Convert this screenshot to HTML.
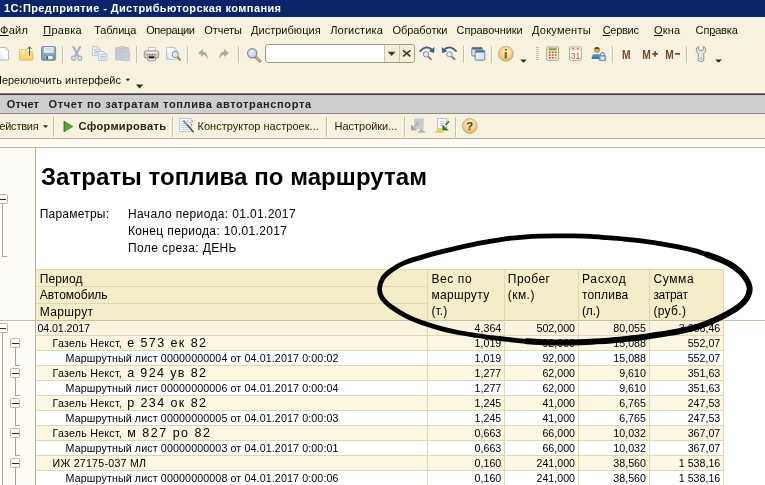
<!DOCTYPE html>
<html lang="ru">
<head>
<meta charset="utf-8">
<title>1С:Предприятие - Дистрибьюторская компания</title>
<style>
html,body{margin:0;padding:0}
body{width:765px;height:485px;overflow:hidden;position:relative;will-change:transform;background:#f7f2e0;font-family:'Liberation Sans',sans-serif}
.a{position:absolute}
.t{position:absolute;white-space:pre;line-height:20px;height:20px}
.t u{text-decoration:underline;text-underline-offset:1px}
.sep{position:absolute;width:1px;background:#c9c3a8;box-shadow:1px 0 0 #fffdf4}
.hl{position:absolute;height:1px;background:#d9cf9f}
.vl{position:absolute;width:1px;background:#d9cf9f}
.box{position:absolute;width:8.4px;height:8px;border:1px solid #b9b49e;background:#fdfbf2;border-radius:1.5px}
.box:after{content:"";position:absolute;left:1px;top:3.5px;width:6.6px;height:1px;background:#2a2a2a}
.tl{position:absolute;background:#a8a288}
</style>
</head>
<body>
<!-- title bar -->
<div class="a" style="left:0;top:0;width:765px;height:17px;background:#0a246a"></div>
<!-- toolbar search box -->
<div class="a" style="left:265px;top:44px;width:148px;height:17px;border:1px solid #a39d84;border-radius:3px;background:#fff;overflow:hidden">
  <div class="a" style="left:118px;top:0;width:30px;height:17px;background:#f3eedb"></div>
  <div class="a" style="left:118px;top:0;width:1px;height:17px;background:#cfc8ac"></div>
  <div class="a" style="left:133px;top:0;width:1px;height:17px;background:#cfc8ac"></div>
</div>
<svg class="a" style="left:0;top:0" width="765" height="148" viewBox="0 0 765 148">
<defs>
<linearGradient id="gdoc" x1="1" y1="0" x2="0" y2="1"><stop offset="0.45" stop-color="#fff"/><stop offset="1" stop-color="#d3ddee"/></linearGradient>
<linearGradient id="gfold" x1="0" y1="0" x2="0" y2="1"><stop offset="0" stop-color="#fdeaa6"/><stop offset="1" stop-color="#f3d066"/></linearGradient>
<linearGradient id="gsave" x1="0" y1="0" x2="0" y2="1"><stop offset="0" stop-color="#a6bbd1"/><stop offset="1" stop-color="#7f9ab6"/></linearGradient>
<radialGradient id="ginfo" cx="0.5" cy="0.35" r="0.7"><stop offset="0" stop-color="#fff3d6"/><stop offset="0.55" stop-color="#f8cf8c"/><stop offset="1" stop-color="#eda95a"/></radialGradient>
<radialGradient id="glens" cx="0.4" cy="0.35" r="0.7"><stop offset="0" stop-color="#e8f0ff"/><stop offset="1" stop-color="#b4c6ea"/></radialGradient>
<linearGradient id="gwin" x1="0" y1="0" x2="1" y2="1"><stop offset="0" stop-color="#fff"/><stop offset="1" stop-color="#c9d6ea"/></linearGradient>
</defs>
<!-- new doc -->
<path d="M-2.5,47.5H6L8.5,50V60H-2.5Z" fill="url(#gdoc)" stroke="#b3bccd"/>
<path d="M6,47.5V50H8.5" fill="#e9eef6" stroke="#b3bccd" stroke-width="0.8"/>
<!-- open folder -->
<path d="M19.5,50.5Q19.5,49.5 20.5,49.5H25.5L27,52H31.8Q32.8,52 32.8,53V59.2Q32.8,60.2 31.8,60.2H20.5Q19.5,60.2 19.5,59.2Z" fill="url(#gfold)" stroke="#e3bd55" stroke-width="0.9"/>
<path d="M29.5,55.5V47.2M27.2,49.3L29.5,46.8L31.8,49.3" fill="none" stroke="#44525e" stroke-width="0.95"/>
<!-- save -->
<rect x="41.6" y="46.6" width="14" height="13.6" rx="1.2" fill="url(#gsave)" stroke="#6c89a7" stroke-width="1"/>
<rect x="44" y="47.2" width="9.4" height="5.4" fill="#f4f7fb"/>
<path d="M45,48.8H52.4M45,50.6H52.4" stroke="#b9c6d6" stroke-width="0.8"/>
<rect x="45" y="55.2" width="8" height="4.6" fill="#e8ebef" stroke="#50627a" stroke-width="0.6"/>
<rect x="46.2" y="56.2" width="1.6" height="3" fill="#2e3c50"/>
<!-- sep -->
<path d="M62.5,46V63" stroke="#c6bfa5"/><path d="M63.5,46V63" stroke="#fdfbf3"/>
<!-- scissors -->
<g fill="#a7b2c6" stroke="none">
<path d="M71.8,46.2L74.4,46.2L79.2,55.8L77.4,57Z"/><path d="M81.6,46.2L79,46.2L74.2,55.8L76,57Z"/>
</g>
<g fill="none" stroke="#a7b2c6" stroke-width="1.4">
<rect x="71.8" y="56.2" width="3.6" height="3.8" rx="1"/>
<rect x="78" y="56.2" width="3.6" height="3.8" rx="1"/>
</g>
<!-- copy -->
<path d="M92.6,46.6H97.6L100.2,49.2V55.6H92.6Z" fill="#f1f4f9" stroke="#b5becd" stroke-width="0.9"/>
<path d="M97.6,46.6V49.2H100.2" fill="#dfe5ee" stroke="#b5becd" stroke-width="0.7"/>
<path d="M94.2,49.5H96.6M94.2,51.3H98.6M94.2,53.1H98.6" stroke="#9db0cb" stroke-width="0.9"/>
<path d="M98.6,51.4H103.8L106.8,54.4V60.4H98.6Z" fill="#f4f6fa" stroke="#b5becd" stroke-width="0.9"/>
<path d="M103.8,51.4V54.4H106.8" fill="#dfe5ee" stroke="#b5becd" stroke-width="0.7"/>
<path d="M100.2,54.6H102.8M100.2,56.4H105.2M100.2,58.2H105.2" stroke="#9db0cb" stroke-width="0.9"/>
<!-- paste -->
<rect x="115.6" y="47.6" width="13.4" height="12.4" rx="1" fill="#c6cad8" stroke="#b9bdcb" stroke-width="0.8"/>
<rect x="119.6" y="46.4" width="5.4" height="2.8" rx="1" fill="#dcc9ad" stroke="#c8b79e" stroke-width="0.6"/>
<rect x="121.6" y="52.4" width="8" height="8" fill="#cad1d6" stroke="#b8c0c8" stroke-width="0.7"/>
<path d="M123,55H128M123,57H128" stroke="#bcc4d2" stroke-width="0.8"/>
<path d="M136.5,46V63" stroke="#c6bfa5"/><path d="M137.5,46V63" stroke="#fdfbf3"/>
<!-- printer -->
<rect x="148.6" y="47.4" width="6.6" height="4.6" fill="#f7f7fa" stroke="#b9b4be" stroke-width="0.7"/>
<rect x="144.3" y="50.9" width="14.4" height="7.3" rx="2" fill="#ddd3cf" stroke="#8f807c" stroke-width="0.9"/>
<path d="M145.6,52.2H157.4" stroke="#f3eeeb" stroke-width="1"/>
<path d="M146.4,54.6H156.8" stroke="#7b5a50" stroke-width="0.9" stroke-dasharray="1.6 0.9"/>
<rect x="147.8" y="56" width="7.6" height="4.8" rx="0.6" fill="#efecea" stroke="#8f807c" stroke-width="0.8"/>
<rect x="148.8" y="56.4" width="5.6" height="2" fill="#1d1a1a"/>
<!-- preview -->
<path d="M166.6,47.4H174.4L177.2,50.2V59.4H166.6Z" fill="url(#gdoc)" stroke="#b3bccd" stroke-width="0.9"/>
<path d="M174.4,47.4V50.2H177.2" fill="#e9eef6" stroke="#b3bccd" stroke-width="0.7"/>
<path d="M177.4,57L180,59.8" stroke="#c0762f" stroke-width="2" stroke-linecap="round"/>
<circle cx="175.2" cy="54.5" r="3.1" fill="#e4e7f2" stroke="#8c8b9c" stroke-width="1"/>
<path d="M187.5,46V63" stroke="#c6bfa5"/><path d="M188.5,46V63" stroke="#fdfbf3"/>
<!-- undo / redo -->
<path d="M198.2,53L203,48.8V51.4Q207.6,51.6 207.8,59.2Q206,55.2 203,55V57Z" fill="#aab09d"/>
<path d="M228.9,53L224.1,48.8V51.4Q219.5,51.6 219.3,59.2Q221.1,55.2 224.1,55V57Z" fill="#aab09d"/>
<path d="M238.5,46V63" stroke="#c6bfa5"/><path d="M239.5,46V63" stroke="#fdfbf3"/>
<!-- magnifier -->
<path d="M256,57.2L259.8,61" stroke="#8d7458" stroke-width="3" stroke-linecap="round"/>
<path d="M256.2,57.4L259.7,60.9" stroke="#d6b48c" stroke-width="1.6" stroke-linecap="round"/>
<circle cx="252.2" cy="53.3" r="4.6" fill="url(#glens)" stroke="#8c8890" stroke-width="1.2"/>
<!-- search dropdown arrow and X -->
<path d="M387.6,51.8H395.6L391.6,56Z" fill="#4a3e10"/>
<path d="M403,50.4L410.4,56.4M410.4,50.4L403,56.4" stroke="#4a3e10" stroke-width="1.7"/>
<!-- find next -->
<path d="M419.6,51.6Q426.4,44 432.6,50.2" fill="none" stroke="#3d5f88" stroke-width="1.7"/>
<path d="M434.6,47L434,53L428.8,51.2Z" fill="#3d5f88"/>
<path d="M428.2,56.6L431,59.2" stroke="#b07264" stroke-width="1.9" stroke-linecap="round"/>
<circle cx="426" cy="54.3" r="2.7" fill="#dfe7f6" stroke="#8d8fa5" stroke-width="1"/>
<!-- find prev -->
<path d="M456.6,51.6Q449.8,44 443.6,50.2" fill="none" stroke="#3d5f88" stroke-width="1.7"/>
<path d="M441.6,47L442.2,53L447.4,51.2Z" fill="#3d5f88"/>
<path d="M451.8,56.6L454.6,59.2" stroke="#b07264" stroke-width="1.9" stroke-linecap="round"/>
<circle cx="449.6" cy="54.3" r="2.7" fill="#dfe7f6" stroke="#8d8fa5" stroke-width="1"/>
<path d="M463.5,46V63" stroke="#c6bfa5"/><path d="M464.5,46V63" stroke="#fdfbf3"/>
<!-- windows -->
<rect x="471.8" y="47.4" width="10.4" height="8.6" rx="1" fill="#dfe7f2" stroke="#5f7c9c" stroke-width="0.9"/>
<rect x="472.2" y="47.6" width="9.6" height="2" fill="#4d6b8c"/>
<rect x="475.2" y="50.4" width="9.6" height="9.8" rx="1" fill="url(#gwin)" stroke="#5f7c9c" stroke-width="0.9"/>
<rect x="475.6" y="50.6" width="8.8" height="2" fill="#55728f"/>
<path d="M491.5,46V63" stroke="#c6bfa5"/><path d="M492.5,46V63" stroke="#fdfbf3"/>
<!-- info -->
<circle cx="505.9" cy="53.8" r="7.4" fill="url(#ginfo)" stroke="#c7a57c" stroke-width="0.9"/>
<circle cx="505.9" cy="49.8" r="1.15" fill="#5d7c1c"/>
<path d="M504.6,52H506.9V58.4H504.6Z" fill="#5d7c1c"/>
<path d="M520.2,59.4H526.8L523.5,62.8Z" fill="#382c08"/>
<!-- grip -->
<path d="M536,47.5H539M536,49.5H539M536,51.5H539M536,53.5H539M536,55.5H539M536,57.5H539M536,59.5H539" stroke="#c4bda2" stroke-width="1"/>
<!-- calculator -->
<rect x="546.8" y="47" width="11.8" height="13.4" rx="0.8" fill="#fbf0d2" stroke="#a29d8b" stroke-width="0.9"/>
<rect x="548.6" y="48.2" width="8.2" height="2.2" fill="#7fa94f"/>
<g fill="#a5532e"><rect x="548.8" y="51.6" width="1.8" height="1.5"/><rect x="551.8" y="51.6" width="1.8" height="1.5"/><rect x="554.8" y="51.6" width="1.8" height="1.5"/>
<rect x="548.8" y="54.3" width="1.8" height="1.5"/><rect x="551.8" y="54.3" width="1.8" height="1.5"/><rect x="554.8" y="54.3" width="1.8" height="1.5"/>
<rect x="548.8" y="57" width="1.8" height="1.5"/><rect x="551.8" y="57" width="1.8" height="1.5"/><rect x="554.8" y="57" width="1.8" height="1.5" fill="#d98a2c"/></g>
<!-- calendar -->
<rect x="569.5" y="47" width="11.8" height="13.4" rx="0.8" fill="#fffdf8" stroke="#a9a08c" stroke-width="0.9"/>
<rect x="570" y="47.4" width="10.8" height="2.8" fill="#f4dfb4"/>
<circle cx="573" cy="48.6" r="0.8" fill="#b5543a"/><circle cx="577.8" cy="48.6" r="0.8" fill="#b5543a"/>
<text x="575.4" y="59.2" font-family="'Liberation Sans',sans-serif" font-size="9.5" text-anchor="middle" fill="#d2472a" textLength="9.4" lengthAdjust="spacingAndGlyphs">31</text>
<!-- user + lock -->
<path d="M591.8,58.8V57Q591.8,54.4 595,54.2H599Q600,54.4 600,55.6V58.8Z" fill="#3c8fd2"/>
<path d="M591.8,58.8V57.4H600V58.8Z" fill="#2b6ea8"/>
<circle cx="597" cy="50" r="2.7" fill="#eaa63c" stroke="#b47a28" stroke-width="0.6"/>
<path d="M594.3,49.6Q594.6,46.8 597,46.9Q599.4,46.8 599.7,49.6Q597,47.8 594.3,49.6Z" fill="#4f4226"/>
<path d="M600.6,56V54.6Q600.6,52.6 602.5,52.6Q604.4,52.6 604.4,54.6V56" fill="none" stroke="#7a8ea8" stroke-width="1.1"/>
<rect x="599.3" y="55.6" width="6.4" height="5" rx="0.6" fill="#a6b6c9" stroke="#6b8199" stroke-width="0.8"/>
<rect x="601.4" y="56.8" width="2.2" height="3" fill="#f4f7fa"/>
<path d="M612.5,46V63" stroke="#c6bfa5"/><path d="M613.5,46V63" stroke="#fdfbf3"/>
<path d="M686.5,46V63" stroke="#c6bfa5"/><path d="M687.5,46V63" stroke="#fdfbf3"/>
<!-- wrench -->
<path d="M698.6,46.4V49.6Q698.6,50.6 701,50.6Q703.4,50.6 703.4,49.6V46.4Q705.8,47.4 705.8,50Q705.8,52.2 703.8,53.2V60Q703.8,61.6 701,61.6Q698.2,61.6 698.2,60V53.2Q696.2,52.2 696.2,50Q696.2,47.4 698.6,46.4Z" fill="#e6e6e6" stroke="#8b8b8b" stroke-width="0.9"/>
<circle cx="701" cy="58.6" r="1" fill="#fff" stroke="#9a9a9a" stroke-width="0.6"/>
<path d="M715.2,59.4H722L718.6,62.8Z" fill="#382c08"/>
<!-- toolbar 2 arrows -->
<path d="M125.6,78.8H130.2L127.9,81.2Z" fill="#382c08"/>
<path d="M136,84.6H143.2L139.6,88.6Z" fill="#382c08"/>
<!-- M buttons -->
<g font-family="'Liberation Sans',sans-serif" font-size="12.5" font-weight="700" fill="#75482b">
<text x="622.1" y="58.5" textLength="8.5" lengthAdjust="spacingAndGlyphs">M</text>
<text x="642.3" y="58.5" textLength="8.5" lengthAdjust="spacingAndGlyphs">M</text>
<text x="665.2" y="58.5" textLength="8.5" lengthAdjust="spacingAndGlyphs">M</text>
</g>
<path d="M652.4,53.9H657.9M655.15,51.1V56.7" stroke="#75482b" stroke-width="1.6"/>
<path d="M675,53.9H680" stroke="#75482b" stroke-width="1.7"/>
<!-- toolbar 3 -->
<path d="M42.9,125.2H48.1L45.5,128Z" fill="#382c08"/>
<path d="M53.5,117V137" stroke="#c6bfa5"/><path d="M54.5,117V137" stroke="#fdfbf3"/>
<path d="M64.2,121.2L73,126.4L64.2,131.8Z" fill="#5fa42e" stroke="#48792a" stroke-width="0.6"/>
<path d="M64.2,121.2V131.8" stroke="#3c6628" stroke-width="0.9"/>
<path d="M172.5,117V137" stroke="#c6bfa5"/><path d="M173.5,117V137" stroke="#fdfbf3"/>
<!-- wizard -->
<rect x="179.6" y="118.5" width="11.4" height="13" fill="#fbfcfe" stroke="#b4bed0" stroke-width="0.9"/>
<path d="M181.4,121.4H185M181.4,123.4H186M181.4,125.4H187.4M181.4,127.4H188.8M181.4,129.4H189" stroke="#b4c2d8" stroke-width="0.8"/>
<path d="M184,121L193.2,131.8" stroke="#454f5c" stroke-width="1.5" stroke-linecap="round"/>
<path d="M184,121L187,124.5" stroke="#6f9bd0" stroke-width="1.5" stroke-linecap="round"/>
<g fill="#d9584c"><rect x="187.2" y="120.4" width="1.2" height="1.2"/><rect x="191.6" y="120.6" width="1.2" height="1.2"/><rect x="190.6" y="124" width="1.2" height="1.2"/><rect x="189.4" y="122.2" width="1" height="1"/></g>
<path d="M326.5,117V137" stroke="#c6bfa5"/><path d="M327.5,117V137" stroke="#fdfbf3"/>
<path d="M404.5,117V137" stroke="#c6bfa5"/><path d="M405.5,117V137" stroke="#fdfbf3"/>
<!-- disabled icon -->
<rect x="414.2" y="118.4" width="9.6" height="10.8" fill="#c9cbd3"/>
<path d="M416,121H422M416,123H422M416,125H420" stroke="#bfc2cc" stroke-width="0.8"/>
<path d="M411,124.2L417.4,130.6H411Z" fill="#a3a79f"/><path d="M418.6,122.4L414.6,126.4" stroke="#a9ada6" stroke-width="1.6"/>
<path d="M417,132.8L421.5,128.6L426,132.8Z" fill="#b8b8b3"/>
<!-- second icon -->
<rect x="437.6" y="118.6" width="9" height="10.4" fill="#fcfdff" stroke="#b2bac9" stroke-width="0.9"/>
<path d="M439.4,121.4H444.8M439.4,123.4H444.8M439.4,125.4H442.4" stroke="#b9c0cc" stroke-width="0.8"/>
<path d="M449,121.4L445.4,125" stroke="#2f7f33" stroke-width="1.6"/>
<path d="M442.4,124.4L448.8,130.6H442.4Z" fill="#2f7f33"/>
<path d="M435,132.4L439.6,127.8L444.2,132.4Z" fill="#f3cf4c" stroke="#e2b93c" stroke-width="0.5"/>
<path d="M455.5,117V137" stroke="#c6bfa5"/><path d="M456.5,117V137" stroke="#fdfbf3"/>
<!-- help -->
<circle cx="469.8" cy="126" r="7.4" fill="url(#ginfo)" stroke="#c7a57c" stroke-width="0.9"/>
<text x="469.8" y="130.2" font-family="'Liberation Sans',sans-serif" font-size="11.5" font-weight="700" text-anchor="middle" fill="#4a3a1c">?</text>

</svg>

<!-- dark line + grey bar -->
<div class="a" style="left:0;top:93px;width:765px;height:1px;background:#7c7c7c"></div>
<div class="a" style="left:0;top:94px;width:765px;height:1px;background:#3a3a3a"></div>
<div class="a" style="left:0;top:95px;width:765px;height:18px;background:#cecece"></div>
<div class="a" style="left:0;top:113px;width:765px;height:1px;background:#8e8e8e"></div>
<!-- toolbar 3 bottom line and strip -->
<div class="a" style="left:0;top:138px;width:765px;height:1px;background:#b9b197"></div>
<div class="a" style="left:0;top:139px;width:765px;height:8px;background:#fcfaf2"></div>
<div class="a" style="left:0;top:147px;width:765px;height:1px;background:#bcb59c"></div>
<!-- content -->
<div class="a" style="left:0;top:148px;width:765px;height:337px;background:#fff"></div>
<div class="a" style="left:0;top:148px;width:35px;height:337px;background:#fdfcf6"></div>
<div class="a" style="left:35px;top:148px;width:1px;height:337px;background:#bcb59c"></div>
<div class="a" style="left:36px;top:269px;width:688px;height:51px;background:#f5edc8"></div>
<div class="a" style="left:36px;top:269px;width:688px;height:1px;background:#e0d7ac"></div>
<div class="a" style="left:36px;top:286px;width:391px;height:1px;background:#e0d7ac"></div>
<div class="a" style="left:36px;top:303px;width:391px;height:1px;background:#e0d7ac"></div>
<div class="a" style="left:36px;top:321px;width:688px;height:14px;background:#fdf2e0"></div>
<div class="a" style="left:36px;top:336px;width:688px;height:14px;background:#fcf7e3"></div>
<div class="a" style="left:36px;top:335px;width:688px;height:1px;background:#e0d7ac"></div>
<div class="a" style="left:36px;top:351px;width:688px;height:14px;background:#ffffff"></div>
<div class="a" style="left:36px;top:350px;width:688px;height:1px;background:#e0d7ac"></div>
<div class="a" style="left:36px;top:366px;width:688px;height:14px;background:#fcf7e3"></div>
<div class="a" style="left:36px;top:365px;width:688px;height:1px;background:#e0d7ac"></div>
<div class="a" style="left:36px;top:381px;width:688px;height:14px;background:#ffffff"></div>
<div class="a" style="left:36px;top:380px;width:688px;height:1px;background:#e0d7ac"></div>
<div class="a" style="left:36px;top:396px;width:688px;height:14px;background:#fcf7e3"></div>
<div class="a" style="left:36px;top:395px;width:688px;height:1px;background:#e0d7ac"></div>
<div class="a" style="left:36px;top:411px;width:688px;height:14px;background:#ffffff"></div>
<div class="a" style="left:36px;top:410px;width:688px;height:1px;background:#e0d7ac"></div>
<div class="a" style="left:36px;top:426px;width:688px;height:14px;background:#fcf7e3"></div>
<div class="a" style="left:36px;top:425px;width:688px;height:1px;background:#e0d7ac"></div>
<div class="a" style="left:36px;top:441px;width:688px;height:14px;background:#ffffff"></div>
<div class="a" style="left:36px;top:440px;width:688px;height:1px;background:#e0d7ac"></div>
<div class="a" style="left:36px;top:456px;width:688px;height:14px;background:#fcf7e3"></div>
<div class="a" style="left:36px;top:455px;width:688px;height:1px;background:#e0d7ac"></div>
<div class="a" style="left:36px;top:471px;width:688px;height:14px;background:#ffffff"></div>
<div class="a" style="left:36px;top:470px;width:688px;height:1px;background:#e0d7ac"></div>
<div class="a" style="left:0px;top:320px;width:765px;height:1px;background:#c5bfa6"></div>
<div class="a" style="left:427px;top:269px;width:1px;height:216px;background:#e0d7ac"></div>
<div class="a" style="left:504px;top:269px;width:1px;height:216px;background:#e0d7ac"></div>
<div class="a" style="left:578px;top:269px;width:1px;height:216px;background:#e0d7ac"></div>
<div class="a" style="left:649px;top:269px;width:1px;height:216px;background:#e0d7ac"></div>
<div class="a" style="left:723px;top:269px;width:1px;height:216px;background:#e0d7ac"></div>
<div class="box" style="left:-2.4px;top:194px"></div>
<div class="a" style="left:2px;top:204px;width:1px;height:52px;background:#a9a48c"></div>
<div class="a" style="left:2px;top:256px;width:5px;height:1px;background:#a9a48c"></div>
<div class="box" style="left:-2.4px;top:323px"></div>
<div class="a" style="left:2px;top:333px;width:1px;height:152px;background:#a9a48c"></div>
<div class="box" style="left:10px;top:338px"></div>
<div class="a" style="left:15px;top:348px;width:1px;height:18px;background:#a9a48c"></div>
<div class="a" style="left:15px;top:365px;width:5px;height:1px;background:#a9a48c"></div>
<div class="box" style="left:10px;top:368px"></div>
<div class="a" style="left:15px;top:378px;width:1px;height:18px;background:#a9a48c"></div>
<div class="a" style="left:15px;top:395px;width:5px;height:1px;background:#a9a48c"></div>
<div class="box" style="left:10px;top:398px"></div>
<div class="a" style="left:15px;top:408px;width:1px;height:18px;background:#a9a48c"></div>
<div class="a" style="left:15px;top:425px;width:5px;height:1px;background:#a9a48c"></div>
<div class="box" style="left:10px;top:428px"></div>
<div class="a" style="left:15px;top:438px;width:1px;height:18px;background:#a9a48c"></div>
<div class="a" style="left:15px;top:455px;width:5px;height:1px;background:#a9a48c"></div>
<div class="box" style="left:10px;top:458px"></div>
<div class="a" style="left:15px;top:468px;width:1px;height:18px;background:#a9a48c"></div>
<div class="a" style="left:15px;top:485px;width:5px;height:1px;background:#a9a48c"></div>
<span class="t" style="top:-1.81px;font-size:11px;font-weight:700;color:#fff;left:4.00px;letter-spacing:0.394px;">1С:Предприятие - Дистрибьюторская компания</span>
<span class="t" style="top:20.19px;font-size:11px;color:#151001;left:0.00px;letter-spacing:0.318px;"><u>Ф</u>айл</span>
<span class="t" style="top:20.19px;font-size:11px;color:#151001;left:43.20px;letter-spacing:0.266px;"><u>П</u>равка</span>
<span class="t" style="top:20.19px;font-size:11px;color:#151001;left:94.20px;letter-spacing:-0.157px;">Таблица</span>
<span class="t" style="top:20.19px;font-size:11px;color:#151001;left:146.20px;letter-spacing:-0.381px;">Операции</span>
<span class="t" style="top:20.19px;font-size:11px;color:#151001;left:204.30px;letter-spacing:-0.066px;">Отчеты</span>
<span class="t" style="top:20.19px;font-size:11px;color:#151001;left:251.00px;letter-spacing:0.024px;">Дистрибюция</span>
<span class="t" style="top:20.19px;font-size:11px;color:#151001;left:330.20px;letter-spacing:0.180px;">Логистика</span>
<span class="t" style="top:20.19px;font-size:11px;color:#151001;left:392.50px;letter-spacing:-0.058px;">Обработки</span>
<span class="t" style="top:20.19px;font-size:11px;color:#151001;left:456.60px;letter-spacing:-0.054px;">Справочники</span>
<span class="t" style="top:20.19px;font-size:11px;color:#151001;left:532.00px;letter-spacing:0.237px;">Документы</span>
<span class="t" style="top:20.19px;font-size:11px;color:#151001;left:602.70px;letter-spacing:-0.274px;"><u>С</u>ервис</span>
<span class="t" style="top:20.19px;font-size:11px;color:#151001;left:654.00px;letter-spacing:0.146px;"><u>О</u>кна</span>
<span class="t" style="top:20.19px;font-size:11px;color:#151001;left:695.60px;letter-spacing:-0.159px;">Сп<u>р</u>авка</span>
<span class="t" style="top:70.19px;font-size:11px;color:#151001;left:-6.00px;letter-spacing:-0.026px;">Переключить интерфейс</span>
<span class="t" style="top:94.19px;font-size:11px;font-weight:700;color:#222;left:6.70px;letter-spacing:0.149px;">Отчет</span>
<span class="t" style="top:94.19px;font-size:11px;font-weight:700;color:#222;left:48.50px;letter-spacing:0.615px;">Отчет по затратам топлива автотранспорта</span>
<span class="t" style="top:116.19px;font-size:11px;color:#2c2304;left:-8.00px;letter-spacing:-0.208px;">Действия</span>
<span class="t" style="top:116.19px;font-size:11px;font-weight:700;color:#2c2304;left:78.50px;letter-spacing:0.328px;">Сформировать</span>
<span class="t" style="top:116.19px;font-size:11px;color:#2c2304;left:197.50px;letter-spacing:0.021px;">Конструктор настроек...</span>
<span class="t" style="top:116.19px;font-size:11px;color:#2c2304;left:334.60px;letter-spacing:-0.037px;">Настройки...</span>
<span class="t" style="top:167.18px;font-size:24px;font-weight:700;left:41.00px;letter-spacing:0.065px;">Затраты топлива по маршрутам</span>
<span class="t" style="top:204.44px;font-size:12px;left:39.70px;letter-spacing:0.221px;">Параметры:</span>
<span class="t" style="top:204.44px;font-size:12px;left:128.00px;letter-spacing:0.363px;">Начало периода: 01.01.2017</span>
<span class="t" style="top:221.34px;font-size:12px;left:128.00px;letter-spacing:0.352px;">Конец периода: 10.01.2017</span>
<span class="t" style="top:237.84px;font-size:12px;left:128.00px;letter-spacing:0.390px;">Поле среза: ДЕНЬ</span>
<span class="t" style="top:268.84px;font-size:12px;left:39.70px;letter-spacing:0.141px;">Период</span>
<span class="t" style="top:285.34px;font-size:12px;left:39.70px;">Автомобиль</span>
<span class="t" style="top:301.84px;font-size:12px;left:39.70px;letter-spacing:0.360px;">Маршрут</span>
<span class="t" style="top:268.64px;font-size:12px;left:431.40px;letter-spacing:0.603px;">Вес по</span>
<span class="t" style="top:285.04px;font-size:12px;left:431.40px;letter-spacing:0.342px;">маршруту</span>
<span class="t" style="top:300.74px;font-size:12px;left:431.40px;letter-spacing:0.100px;">(т.)</span>
<span class="t" style="top:268.64px;font-size:12px;left:507.80px;letter-spacing:0.487px;">Пробег</span>
<span class="t" style="top:285.04px;font-size:12px;left:507.80px;letter-spacing:0.443px;">(км.)</span>
<span class="t" style="top:268.64px;font-size:12px;left:581.90px;letter-spacing:0.867px;">Расход</span>
<span class="t" style="top:285.04px;font-size:12px;left:581.90px;letter-spacing:0.207px;">топлива</span>
<span class="t" style="top:300.74px;font-size:12px;left:581.90px;letter-spacing:-0.076px;">(л.)</span>
<span class="t" style="top:268.64px;font-size:12px;left:653.40px;letter-spacing:0.620px;">Сумма</span>
<span class="t" style="top:285.04px;font-size:12px;left:653.40px;letter-spacing:-0.280px;">затрат</span>
<span class="t" style="top:300.74px;font-size:12px;left:653.40px;letter-spacing:0.345px;">(руб.)</span>
<span class="t" style="top:318.30px;font-size:10.67px;left:37.50px;letter-spacing:-0.094px;">04.01.2017</span>
<span class="t" style="top:318.30px;font-size:10.67px;right:263.75px;">4,364</span>
<span class="t" style="top:318.30px;font-size:10.67px;right:190.00px;">502,000</span>
<span class="t" style="top:318.30px;font-size:10.67px;right:119.10px;">80,055</span>
<span class="t" style="top:318.30px;font-size:10.67px;right:44.75px;">3 056,46</span>
<span class="t" style="top:333.30px;font-size:10.67px;left:52.50px;letter-spacing:0.239px;">Газель Некст,</span>
<span class="t" style="top:333.17px;font-size:12.5px;left:127.20px;letter-spacing:1.424px;">е 573 ек 82</span>
<span class="t" style="top:333.30px;font-size:10.67px;right:263.75px;">1,019</span>
<span class="t" style="top:333.30px;font-size:10.67px;right:190.00px;">92,000</span>
<span class="t" style="top:333.30px;font-size:10.67px;right:119.10px;">15,088</span>
<span class="t" style="top:333.30px;font-size:10.67px;right:44.75px;">552,07</span>
<span class="t" style="top:348.30px;font-size:10.67px;left:65.60px;letter-spacing:0.128px;">Маршрутный лист 00000000004 от 04.01.2017 0:00:02</span>
<span class="t" style="top:348.30px;font-size:10.67px;right:263.75px;">1,019</span>
<span class="t" style="top:348.30px;font-size:10.67px;right:190.00px;">92,000</span>
<span class="t" style="top:348.30px;font-size:10.67px;right:119.10px;">15,088</span>
<span class="t" style="top:348.30px;font-size:10.67px;right:44.75px;">552,07</span>
<span class="t" style="top:363.30px;font-size:10.67px;left:52.50px;letter-spacing:0.239px;">Газель Некст,</span>
<span class="t" style="top:363.17px;font-size:12.5px;left:127.20px;letter-spacing:1.377px;">а 924 ув 82</span>
<span class="t" style="top:363.30px;font-size:10.67px;right:263.75px;">1,277</span>
<span class="t" style="top:363.30px;font-size:10.67px;right:190.00px;">62,000</span>
<span class="t" style="top:363.30px;font-size:10.67px;right:119.10px;">9,610</span>
<span class="t" style="top:363.30px;font-size:10.67px;right:44.75px;">351,63</span>
<span class="t" style="top:378.30px;font-size:10.67px;left:65.60px;letter-spacing:0.128px;">Маршрутный лист 00000000006 от 04.01.2017 0:00:04</span>
<span class="t" style="top:378.30px;font-size:10.67px;right:263.75px;">1,277</span>
<span class="t" style="top:378.30px;font-size:10.67px;right:190.00px;">62,000</span>
<span class="t" style="top:378.30px;font-size:10.67px;right:119.10px;">9,610</span>
<span class="t" style="top:378.30px;font-size:10.67px;right:44.75px;">351,63</span>
<span class="t" style="top:393.30px;font-size:10.67px;left:52.50px;letter-spacing:0.239px;">Газель Некст,</span>
<span class="t" style="top:393.17px;font-size:12.5px;left:127.20px;letter-spacing:1.424px;">р 234 ок 82</span>
<span class="t" style="top:393.30px;font-size:10.67px;right:263.75px;">1,245</span>
<span class="t" style="top:393.30px;font-size:10.67px;right:190.00px;">41,000</span>
<span class="t" style="top:393.30px;font-size:10.67px;right:119.10px;">6,765</span>
<span class="t" style="top:393.30px;font-size:10.67px;right:44.75px;">247,53</span>
<span class="t" style="top:408.30px;font-size:10.67px;left:65.60px;letter-spacing:0.128px;">Маршрутный лист 00000000005 от 04.01.2017 0:00:03</span>
<span class="t" style="top:408.30px;font-size:10.67px;right:263.75px;">1,245</span>
<span class="t" style="top:408.30px;font-size:10.67px;right:190.00px;">41,000</span>
<span class="t" style="top:408.30px;font-size:10.67px;right:119.10px;">6,765</span>
<span class="t" style="top:408.30px;font-size:10.67px;right:44.75px;">247,53</span>
<span class="t" style="top:423.30px;font-size:10.67px;left:52.50px;letter-spacing:0.239px;">Газель Некст,</span>
<span class="t" style="top:423.17px;font-size:12.5px;left:127.20px;letter-spacing:1.511px;">м 827 ро 82</span>
<span class="t" style="top:423.30px;font-size:10.67px;right:263.75px;">0,663</span>
<span class="t" style="top:423.30px;font-size:10.67px;right:190.00px;">66,000</span>
<span class="t" style="top:423.30px;font-size:10.67px;right:119.10px;">10,032</span>
<span class="t" style="top:423.30px;font-size:10.67px;right:44.75px;">367,07</span>
<span class="t" style="top:438.30px;font-size:10.67px;left:65.60px;letter-spacing:0.128px;">Маршрутный лист 00000000003 от 04.01.2017 0:00:01</span>
<span class="t" style="top:438.30px;font-size:10.67px;right:263.75px;">0,663</span>
<span class="t" style="top:438.30px;font-size:10.67px;right:190.00px;">66,000</span>
<span class="t" style="top:438.30px;font-size:10.67px;right:119.10px;">10,032</span>
<span class="t" style="top:438.30px;font-size:10.67px;right:44.75px;">367,07</span>
<span class="t" style="top:453.30px;font-size:10.67px;left:52.50px;letter-spacing:0.231px;">ИЖ 27175-037 МЛ</span>
<span class="t" style="top:453.30px;font-size:10.67px;right:263.75px;">0,160</span>
<span class="t" style="top:453.30px;font-size:10.67px;right:190.00px;">241,000</span>
<span class="t" style="top:453.30px;font-size:10.67px;right:119.10px;">38,560</span>
<span class="t" style="top:453.30px;font-size:10.67px;right:44.75px;">1 538,16</span>
<span class="t" style="top:468.30px;font-size:10.67px;left:65.60px;letter-spacing:0.128px;">Маршрутный лист 00000000008 от 04.01.2017 0:00:06</span>
<span class="t" style="top:468.30px;font-size:10.67px;right:263.75px;">0,160</span>
<span class="t" style="top:468.30px;font-size:10.67px;right:190.00px;">241,000</span>
<span class="t" style="top:468.30px;font-size:10.67px;right:119.10px;">38,560</span>
<span class="t" style="top:468.30px;font-size:10.67px;right:44.75px;">1 538,16</span>
<svg class="a" style="left:0;top:0" width="765" height="485" viewBox="0 0 765 485"><path d="M379.6,288.5C379.8,285.2 381.0,281.1 383.0,278.0C385.0,274.9 388.0,272.7 391.4,270.2C394.8,267.7 398.7,265.2 403.5,263.1C408.3,261.0 414.6,259.3 420.2,257.6C425.8,255.9 431.3,254.4 436.9,252.9C442.5,251.4 448.1,250.1 453.7,248.8C459.3,247.5 464.8,246.2 470.4,245.1C476.0,243.9 482.5,242.7 487.1,241.9C491.7,241.1 494.7,240.7 498.0,240.1C501.3,239.5 502.4,239.1 506.7,238.6C510.9,238.1 517.9,237.5 523.5,237.1C529.1,236.7 534.6,236.4 540.2,236.2C545.8,236.0 551.3,235.9 556.9,235.9C562.5,235.9 568.1,235.8 573.7,235.9C579.3,236.0 584.8,236.1 590.4,236.4C596.0,236.7 601.0,237.2 607.1,237.7C613.2,238.2 620.6,238.7 626.7,239.3C632.8,239.9 637.9,240.5 643.5,241.2C649.1,241.9 654.6,242.8 660.2,243.7C665.8,244.6 671.3,245.6 676.9,246.7C682.5,247.8 688.7,249.1 693.7,250.4C698.7,251.7 702.5,253.1 707.0,254.6C711.5,256.1 716.2,257.7 720.7,259.7C725.2,261.7 730.1,264.0 734.0,266.7C737.9,269.4 741.5,272.4 744.1,275.9C746.7,279.4 749.2,283.8 749.6,287.6C750.0,291.4 748.6,295.1 746.6,298.5C744.6,301.9 741.2,304.8 737.4,307.7C733.6,310.6 728.8,313.1 724.0,315.6C719.2,318.1 713.0,320.9 708.5,322.8C704.0,324.7 701.8,325.4 697.1,326.8C692.4,328.2 686.0,329.8 680.4,331.0C674.8,332.2 669.3,332.9 663.7,333.8C658.1,334.7 652.5,335.7 646.9,336.5C641.3,337.3 635.8,337.9 630.2,338.5C624.6,339.1 619.1,339.7 613.5,340.2C607.9,340.7 602.3,341.1 596.7,341.4C591.1,341.7 586.0,342.0 580.0,342.2C574.0,342.4 566.4,342.5 560.4,342.5C554.4,342.5 549.3,342.4 543.7,342.2C538.1,342.0 532.5,341.7 526.9,341.3C521.3,340.9 515.8,340.3 510.2,339.7C504.6,339.1 499.1,338.6 493.5,337.9C487.9,337.2 482.6,336.4 476.7,335.5C470.8,334.6 463.9,333.6 458.0,332.5C452.1,331.4 446.9,330.1 441.3,328.6C435.7,327.1 430.2,325.5 424.6,323.5C419.0,321.5 413.4,319.6 407.8,316.8C402.2,314.0 395.4,310.0 391.1,306.8C386.8,303.6 383.8,300.7 381.9,297.6C380.0,294.6 379.4,291.8 379.6,288.5Z" fill="none" stroke="#000" stroke-width="4.8" stroke-linejoin="round"/><path d="M707.0,254.6C711.5,256.1 716.2,257.7 720.7,259.7C725.2,261.7 730.1,264.0 734.0,266.7C737.9,269.4 741.5,272.4 744.1,275.9C746.7,279.4 749.2,283.8 749.6,287.6C750.0,291.4 748.6,295.1 746.6,298.5C744.6,301.9 741.2,304.8 737.4,307.7C733.6,310.6 728.8,313.1 724.0,315.6C719.2,318.1 713.0,320.9 708.5,322.8C704.0,324.7 701.8,325.4 697.1,326.8C692.4,328.2 686.0,329.8 680.4,331.0C674.8,332.2 669.3,332.9 663.7,333.8C658.1,334.7 652.5,335.7 646.9,336.5C641.3,337.3 635.8,337.9 630.2,338.5C624.6,339.1 619.1,339.7 613.5,340.2C607.9,340.7 602.3,341.1 596.7,341.4C591.1,341.7 586.0,342.0 580.0,342.2C574.0,342.4 566.4,342.5 560.4,342.5C554.4,342.5 549.3,342.4 543.7,342.2C538.1,342.0 532.5,341.7 526.9,341.3" fill="none" stroke="#000" stroke-width="5.9" stroke-linecap="round" stroke-linejoin="round"/></svg>
</body>
</html>
